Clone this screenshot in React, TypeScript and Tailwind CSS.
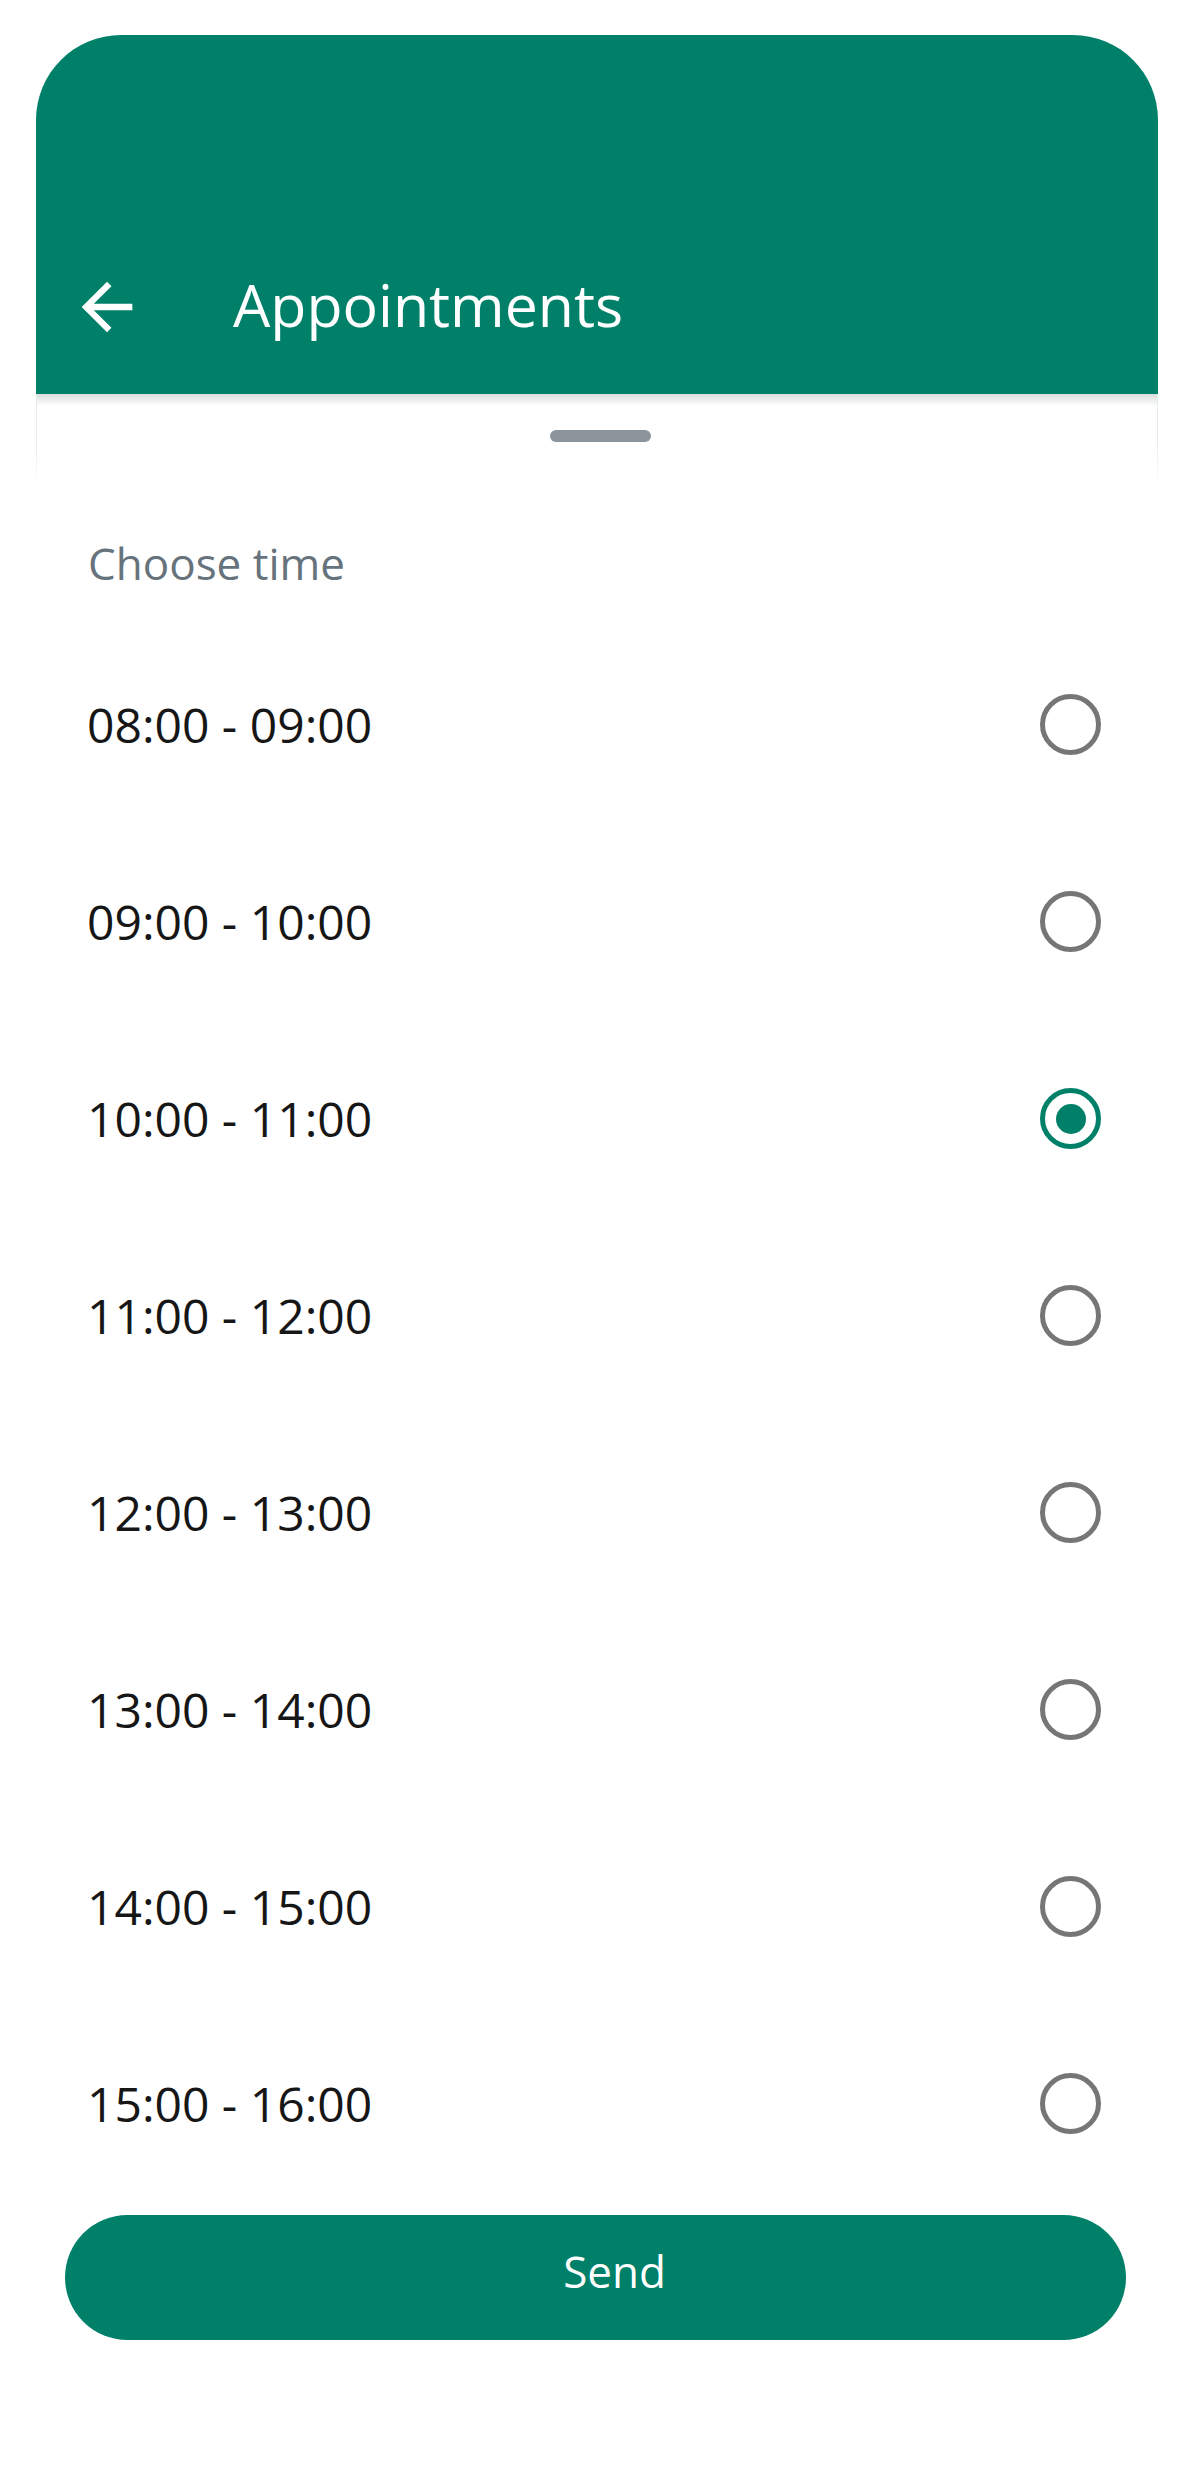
import React from "react";

const slots = [
  "08:00 - 09:00",
  "09:00 - 10:00",
  "10:00 - 11:00",
  "11:00 - 12:00",
  "12:00 - 13:00",
  "13:00 - 14:00",
  "14:00 - 15:00",
  "15:00 - 16:00",
];

const BackArrow = () => (
  <svg viewBox="0 0 24 24" className="w-[76px] h-[76px]" fill="#ffffff">
    <path d="M20 11H7.83l5.59-5.59L12 4l-8 8 8 8 1.41-1.41L7.83 13H20v-2z" />
  </svg>
);

const Radio = ({ checked }: { checked?: boolean }) => (
  <div
    className={
      checked
        ? "w-[61px] h-[61px] rounded-full border-[5px] border-[#008069] flex items-center justify-center"
        : "w-[61px] h-[61px] rounded-full border-[5px] border-[#767676]"
    }
  >
    {checked && <div className="w-[30px] h-[30px] rounded-full bg-[#008069]" />}
  </div>
);

const App = () => {
  const selected = "10:00 - 11:00";

  return (
    <div className="w-[1191px] h-[2475px] bg-white font-['Open_Sans',sans-serif] pt-[35px]">
      <div className="ml-[36px] w-[1122px] h-[359px] bg-[#008069] rounded-t-[85px] flex items-end">
        <div className="h-[174px] w-full flex items-center">
          <div className="ml-[33px]">
            <BackArrow />
          </div>
          <div className="ml-[88px] pb-[5px] text-white text-[59px] leading-none">Appointments</div>
        </div>
      </div>

      <div className="ml-[36px] w-[1122px] h-[90px] border-x border-[#e6eeed] relative">
        <div className="absolute left-0 right-0 top-0 h-[12px] bg-gradient-to-b from-[#d9dedd] to-white" />
        <div className="absolute -left-px -right-px top-[50px] h-[41px] bg-gradient-to-b from-transparent to-white" />
        <div className="relative pt-[36px] flex justify-center pl-[6px]">
          <div className="w-[101px] h-[12px] rounded-full bg-[#8c959c]" />
        </div>
      </div>

      <div className="pl-[88px] mt-[57px] text-[44px] leading-none text-[#67737c]">Choose time</div>

      <div className="mt-[41px] flex flex-col">
        {slots.map((s) => (
          <div key={s} className="h-[197px] flex items-center justify-between pl-[87px] pr-[90px]">
            <span className="text-[48px] leading-none text-[#161616]">{s}</span>
            <Radio checked={s === selected} />
          </div>
        ))}
      </div>

      <div className="mt-[13px] px-[65px]">
        <button className="w-full h-[125px] rounded-full bg-[#008069] text-white text-[44px] leading-none pl-[38px] pb-[14px]">
          Send
        </button>
      </div>
    </div>
  );
};

export default App;
